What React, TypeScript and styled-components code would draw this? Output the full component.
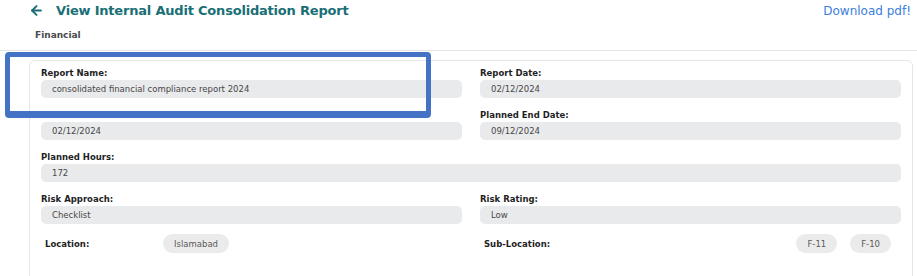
import React from "react";
import styled, { createGlobalStyle } from "styled-components";
import { ArrowLeft } from "lucide-react";

const GlobalStyle = createGlobalStyle`
  html, body {
    margin: 0;
    padding: 0;
    background: #ffffff;
    font-family: "DejaVu Sans", "Liberation Sans", sans-serif;
  }
`;

const Page = styled.div`
  position: relative;
  width: 917px;
  height: 276px;
  overflow: hidden;
  background: #ffffff;
`;

const Header = styled.header`
  display: flex;
  align-items: center;
  justify-content: space-between;
  height: 21px;
  padding: 0 6px 0 29px;
`;

const TitleWrapper = styled.div`
  display: flex;
  align-items: center;
  gap: 12px;
  color: #1a6f76;
  h1 {
    margin: 0;
    font-size: 13px;
    font-weight: 700;
    letter-spacing: -0.2px;
  }
`;

const DownloadLink = styled.a`
  font-size: 12px;
  color: #3a80dc;
  text-decoration: none;
  cursor: pointer;
`;

const SubTitle = styled.h4`
  margin: 0;
  padding: 9px 0 0 35px;
  height: 20px;
  font-size: 9px;
  font-weight: 700;
  color: #4a4a4a;
`;

const Divider = styled.hr`
  margin: 0;
  border: none;
  border-top: 1px solid #e4e4e4;
`;

const Card = styled.section`
  margin: 9px 4px 0 29px;
  padding: 6px 11px 40px;
  border: 1px solid #e6e6e6;
  border-radius: 6px;
`;

const FieldGrid = styled.div`
  display: grid;
  grid-template-columns: 1fr 1fr;
  column-gap: 18px;
  row-gap: 11px;
`;

const Field = styled.div<{ $full?: boolean }>`
  display: flex;
  flex-direction: column;
  grid-column: ${(p) => (p.$full ? "1 / -1" : "auto")};
`;

const Label = styled.label`
  height: 12px;
  line-height: 12px;
  margin-bottom: 1px;
  font-size: 8.5px;
  font-weight: 700;
  color: #1f1f1f;
`;

const ValueBox = styled.div`
  display: flex;
  align-items: center;
  height: 18px;
  padding: 0 11px;
  border-radius: 5px;
  background: #e9eaec;
  font-size: 8.5px;
  color: #474747;
`;

const LocationGrid = styled.div`
  display: grid;
  grid-template-columns: 1fr 1fr;
  column-gap: 18px;
  margin-top: 10px;
`;

const LocationRow = styled.div<{ $end?: boolean }>`
  display: flex;
  align-items: center;
  padding: 0 ${(p) => (p.$end ? "10px" : "0")} 0 4px;
`;

const LocationLabel = styled.span`
  width: 118px;
  flex: none;
  font-size: 8.5px;
  font-weight: 700;
  color: #1f1f1f;
`;

const ChipList = styled.div<{ $end?: boolean }>`
  display: flex;
  gap: 13px;
  margin-left: ${(p) => (p.$end ? "auto" : "0")};
`;

const Chip = styled.div`
  display: flex;
  align-items: center;
  height: 19px;
  padding: 0 11px;
  border-radius: 10px;
  background: #ebebeb;
  font-size: 8.5px;
  color: #5a5a5a;
`;

const Highlight = styled.div`
  position: absolute;
  left: 5px;
  top: 52px;
  width: 416px;
  height: 54px;
  border-style: solid;
  border-color: #4472c4;
  border-width: 5px 5px 7px 5px;
  border-radius: 4px;
  pointer-events: none;
`;

const fields = [
  { label: "Report Name:", value: "consolidated financial compliance report 2024" },
  { label: "Report Date:", value: "02/12/2024" },
  { label: "Planned Start Date:", value: "02/12/2024" },
  { label: "Planned End Date:", value: "09/12/2024" },
  { label: "Planned Hours:", value: "172", full: true },
  { label: "Risk Approach:", value: "Checklist" },
  { label: "Risk Rating:", value: "Low" },
];

export default function App() {
  return (
    <Page>
      <GlobalStyle />
      <Header>
        <TitleWrapper>
          <ArrowLeft size={15} strokeWidth={3.2} />
          <h1>View Internal Audit Consolidation Report</h1>
        </TitleWrapper>
        <DownloadLink>Download pdf!</DownloadLink>
      </Header>
      <SubTitle>Financial</SubTitle>
      <Divider />
      <Card>
        <FieldGrid>
          {fields.map((f) => (
            <Field key={f.label} $full={f.full}>
              <Label>{f.label}</Label>
              <ValueBox>{f.value}</ValueBox>
            </Field>
          ))}
        </FieldGrid>
        <LocationGrid>
          <LocationRow>
            <LocationLabel>Location:</LocationLabel>
            <ChipList>
              <Chip>Islamabad</Chip>
            </ChipList>
          </LocationRow>
          <LocationRow $end>
            <LocationLabel>Sub-Location:</LocationLabel>
            <ChipList $end>
              <Chip>F-11</Chip>
              <Chip>F-10</Chip>
            </ChipList>
          </LocationRow>
        </LocationGrid>
      </Card>
      <Highlight />
    </Page>
  );
}
